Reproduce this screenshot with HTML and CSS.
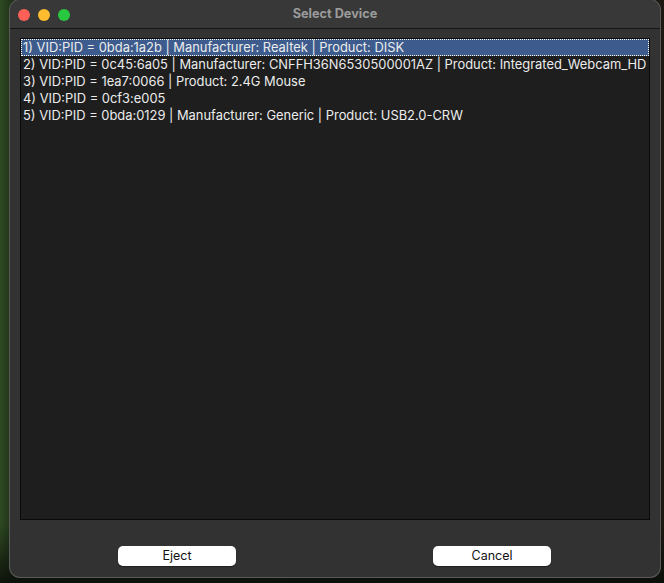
FILE: index.html
```html
<!DOCTYPE html>
<html>
<head>
<meta charset="utf-8">
<title>Select Device</title>
<link rel="stylesheet" href="styles.css">
</head>
<body>
<div class="window">
  <div class="titlebar">
    <div class="lights">
      <span class="light red"></span>
      <span class="light yellow"></span>
      <span class="light green"></span>
    </div>
    <div class="title">Select Device</div>
  </div>
  <div class="content">
    <div class="list">
      <div class="row selected">1) VID:PID = 0bda:1a2b | Manufacturer: Realtek | Product: DISK</div>
      <div class="row">2) VID:PID = 0c45:6a05 | Manufacturer: CNFFH36N6530500001AZ | Product: Integrated_Webcam_HD</div>
      <div class="row">3) VID:PID = 1ea7:0066 | Product: 2.4G Mouse</div>
      <div class="row">4) VID:PID = 0cf3:e005</div>
      <div class="row">5) VID:PID = 0bda:0129 | Manufacturer: Generic | Product: USB2.0-CRW</div>
    </div>
    <div class="buttons">
      <button class="btn">Eject</button>
      <button class="btn">Cancel</button>
    </div>
  </div>
</div>
</body>
</html>
```

FILE: styles.css
```css
html, body {
  margin: 0;
  padding: 0;
}
body {
  width: 664px;
  height: 583px;
  overflow: hidden;
  background:
    linear-gradient(180deg, rgba(0,0,0,0) 0%, rgba(0,0,0,0) 90%, rgba(10,14,8,0.9) 100%),
    linear-gradient(90deg, #2f4a22 0%, #1d2e18 2%, #16201a 50%, #1c1812 100%);
  font-family: Inter, "Liberation Sans", Arial, sans-serif;
}
.window {
  margin-left: 10px;
  width: 650px;
  height: 577px;
  box-sizing: border-box;
  background: #323232;
  border-radius: 10px;
  box-shadow: 0 0 0 1px #5a5a5a;
  display: flex;
  flex-direction: column;
  overflow: hidden;
}
.titlebar {
  position: relative;
  height: 28px;
  flex: none;
  background: #383838;
  border-bottom: 1px solid #161616;
  display: flex;
  align-items: center;
}
.lights {
  display: flex;
  gap: 8px;
  padding-left: 8px;
  padding-top: 1px;
}
.light {
  width: 12px;
  height: 12px;
  border-radius: 50%;
  display: block;
}
.red { background: #fe5f57; }
.yellow { background: #febc2e; }
.green { background: #28c840; }
.title {
  position: absolute;
  left: 0;
  right: 0;
  top: 0;
  line-height: 28px;
  text-align: center;
  font-weight: 700;
  font-size: 12.7px;
  color: #9b9b9b;
}
.content {
  flex: 1;
  display: flex;
  flex-direction: column;
  padding: 9px 10px 0 10px;
}
.list {
  height: 482px;
  box-sizing: border-box;
  background: #1e1e1e;
  border: 1px solid #0a0a0a;
  overflow: hidden;
}
.row {
  height: 17px;
  line-height: 17px;
  padding-left: 2px;
  font-size: 12.9px;
  color: #ececec;
  white-space: nowrap;
  box-sizing: border-box;
}
.selected {
  background: #3d5c8d;
  outline: 1px dotted #ffffff;
  outline-offset: -1px;
}
.buttons {
  display: flex;
  justify-content: center;
  gap: 197px;
  margin-top: 26px;
  padding-right: 1px;
}
.btn {
  width: 118px;
  height: 20px;
  padding: 0;
  border: none;
  border-radius: 5px;
  background: #ffffff;
  color: #111111;
  font-family: Inter, "Liberation Sans", Arial, sans-serif;
  font-size: 12.5px;
  line-height: 20px;
  box-shadow: 0 1px 1px rgba(0,0,0,0.4);
}
```
